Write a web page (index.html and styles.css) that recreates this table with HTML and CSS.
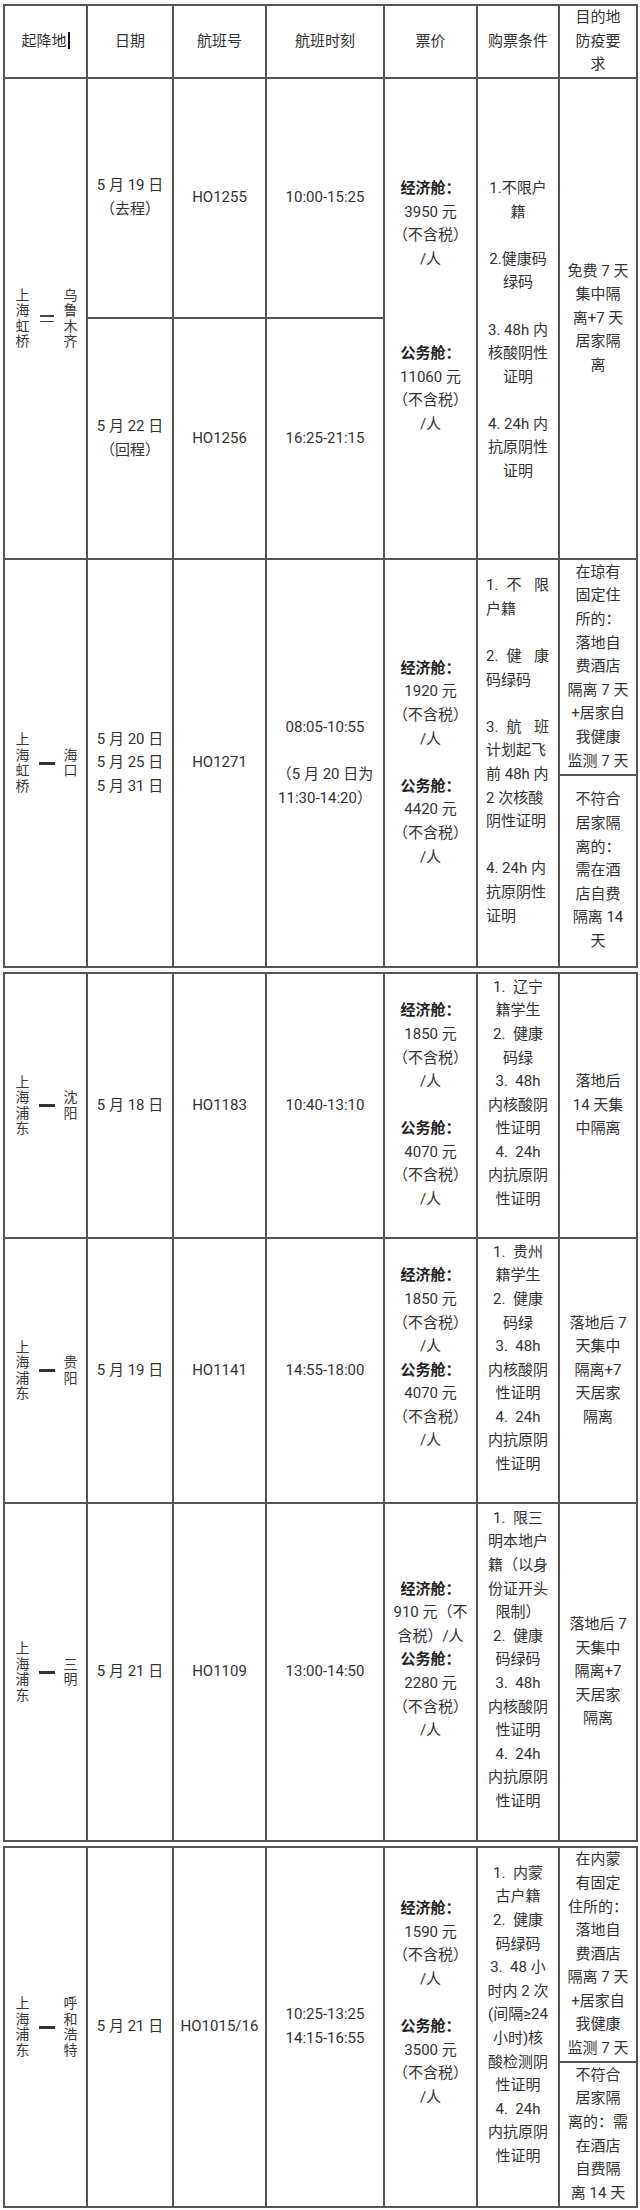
FILE: index.html
```html
<!DOCTYPE html>
<html lang="zh-CN">
<head>
<meta charset="utf-8">
<title>航班信息</title>
<link rel="stylesheet" href="styles.css">
</head>
<body>
<div class="sheet">
  <table class="t1">
    <colgroup>
      <col class="c1"><col class="c2"><col class="c3"><col class="c4"><col class="c5"><col class="c6"><col class="c7">
    </colgroup>
    <tr class="h-head">
      <td>起降地<span class="cursor"></span></td>
      <td>日期</td>
      <td>航班号</td>
      <td>航班时刻</td>
      <td>票价</td>
      <td>购票条件</td>
      <td>目的地<br>防疫要<br>求</td>
    </tr>
    <tr class="h-r1a">
      <td rowspan="2">
        <div class="route"><div class="vt">上<br>海<br>虹<br>桥</div><div class="eq"><i></i><i></i></div><div class="vt">乌<br>鲁<br>木<br>齐</div></div>
      </td>
      <td>5 月 19 日<br>（去程）</td>
      <td>HO1255</td>
      <td>10:00-15:25</td>
      <td rowspan="2"><b>经济舱：</b><br>3950 元<br>（不含税）<br>/人<br><br><br><br><b>公务舱：</b><br>11060 元<br>（不含税）<br>/人<br>&nbsp;</td>
      <td rowspan="2">&nbsp;<br>1.不限户<br>籍<br><br>2.健康码<br>绿码<br><br>3. 48h 内<br>核酸阴性<br>证明<br><br>4. 24h 内<br>抗原阴性<br>证明</td>
      <td rowspan="2">免费 7 天<br>集中隔<br>离+7 天<br>居家隔<br>离</td>
    </tr>
    <tr class="h-r1b">
      <td>5 月 22 日<br>（回程）</td>
      <td>HO1256</td>
      <td>16:25-21:15</td>
    </tr>
    <tr class="h-r2a">
      <td rowspan="2">
        <div class="route"><div class="vt">上<br>海<br>虹<br>桥</div><div class="dash"></div><div class="vt">海<br>口</div></div>
      </td>
      <td rowspan="2">5 月 20 日<br>5 月 25 日<br>5 月 31 日</td>
      <td rowspan="2">HO1271</td>
      <td rowspan="2">08:05-10:55<br><br>（5 月 20 日为<br>11:30-14:20）</td>
      <td rowspan="2"><b>经济舱：</b><br>1920 元<br>（不含税）<br>/人<br><br><b>公务舱：</b><br>4420 元<br>（不含税）<br>/人</td>
      <td rowspan="2" class="left">
        <span class="jl">1. 不 限</span>户籍<br><br><span class="jl">2. 健 康</span>码绿码<br><br><span class="jl">3. 航 班</span>计划起飞<br>前 48h 内<br>2 次核酸<br>阴性证明<br><br>4. 24h 内<br>抗原阴性<br>证明<br>&nbsp;
      </td>
      <td>在琼有<br>固定住<br>所的：<br>落地自<br>费酒店<br>隔离 7 天<br>+居家自<br>我健康<br>监测 7 天</td>
    </tr>
    <tr class="h-r2b">
      <td>不符合<br>居家隔<br>离的：<br>需在酒<br>店自费<br>隔离 14<br>天</td>
    </tr>
  </table>

  <table class="t2">
    <colgroup>
      <col class="c1"><col class="c2"><col class="c3"><col class="c4"><col class="c5"><col class="c6"><col class="c7">
    </colgroup>
    <tr class="h-r3">
      <td><div class="route"><div class="vt">上<br>海<br>浦<br>东</div><div class="dash"></div><div class="vt">沈<br>阳</div></div></td>
      <td>5 月 18 日</td>
      <td>HO1183</td>
      <td>10:40-13:10</td>
      <td><b>经济舱：</b><br>1850 元<br>（不含税）<br>/人<br><br><b>公务舱：</b><br>4070 元<br>（不含税）<br>/人</td>
      <td>1.&nbsp;&nbsp;辽宁<br>籍学生<br>2.&nbsp;&nbsp;健康<br>码绿<br>3.&nbsp;&nbsp;48h<br>内核酸阴<br>性证明<br>4.&nbsp;&nbsp;24h<br>内抗原阴<br>性证明<br>&nbsp;</td>
      <td>落地后<br>14 天集<br>中隔离</td>
    </tr>
    <tr class="h-r4">
      <td><div class="route"><div class="vt">上<br>海<br>浦<br>东</div><div class="dash"></div><div class="vt">贵<br>阳</div></div></td>
      <td>5 月 19 日</td>
      <td>HO1141</td>
      <td>14:55-18:00</td>
      <td><b>经济舱：</b><br>1850 元<br>（不含税）<br>/人<br><b>公务舱：</b><br>4070 元<br>（不含税）<br>/人<br>&nbsp;</td>
      <td>1.&nbsp;&nbsp;贵州<br>籍学生<br>2.&nbsp;&nbsp;健康<br>码绿<br>3.&nbsp;&nbsp;48h<br>内核酸阴<br>性证明<br>4.&nbsp;&nbsp;24h<br>内抗原阴<br>性证明<br>&nbsp;</td>
      <td>落地后 7<br>天集中<br>隔离+7<br>天居家<br>隔离</td>
    </tr>
    <tr class="h-r5">
      <td><div class="route"><div class="vt">上<br>海<br>浦<br>东</div><div class="dash"></div><div class="vt">三<br>明</div></div></td>
      <td>5 月 21 日</td>
      <td>HO1109</td>
      <td>13:00-14:50</td>
      <td><b>经济舱：</b><br>910 元（不<br>含税）/人<br><b>公务舱：</b><br>2280 元<br>（不含税）<br>/人<br>&nbsp;</td>
      <td>1.&nbsp;&nbsp;限三<br>明本地户<br>籍（以身<br>份证开头<br>限制）<br>2.&nbsp;&nbsp;健康<br>码绿码<br>3.&nbsp;&nbsp;48h<br>内核酸阴<br>性证明<br>4.&nbsp;&nbsp;24h<br>内抗原阴<br>性证明<br>&nbsp;</td>
      <td>落地后 7<br>天集中<br>隔离+7<br>天居家<br>隔离</td>
    </tr>
  </table>

  <table class="t3">
    <colgroup>
      <col class="c1"><col class="c2"><col class="c3"><col class="c4"><col class="c5"><col class="c6"><col class="c7">
    </colgroup>
    <tr class="h-r6a">
      <td rowspan="2"><div class="route"><div class="vt">上<br>海<br>浦<br>东</div><div class="dash"></div><div class="vt">呼<br>和<br>浩<br>特</div></div></td>
      <td rowspan="2">5 月 21 日</td>
      <td rowspan="2">HO1015/16</td>
      <td rowspan="2">10:25-13:25<br>14:15-16:55</td>
      <td rowspan="2"><b>经济舱：</b><br>1590 元<br>（不含税）<br>/人<br><br><b>公务舱：</b><br>3500 元<br>（不含税）<br>/人<br>&nbsp;<br>&nbsp;</td>
      <td rowspan="2">1.&nbsp;&nbsp;内蒙<br>古户籍<br>2.&nbsp;&nbsp;健康<br>码绿码<br>3.&nbsp;&nbsp;48 小<br>时内 2 次<br>(间隔≥24<br>小时)核<br>酸检测阴<br>性证明<br>4.&nbsp;&nbsp;24h<br>内抗原阴<br>性证明<br>&nbsp;</td>
      <td>在内蒙<br>有固定<br>住所的：<br>落地自<br>费酒店<br>隔离 7 天<br>+居家自<br>我健康<br>监测 7 天</td>
    </tr>
    <tr class="h-r6b">
      <td>不符合<br>居家隔<br>离的：需<br>在酒店<br>自费隔<br>离 14 天</td>
    </tr>
  </table>
</div>
</body>
</html>
```

FILE: styles.css
```css
html, body {
  margin: 0;
  padding: 0;
  background: #ffffff;
}

body {
  font-family: Roboto, "Noto Sans CJK SC", sans-serif;
  font-size: 15px;
  color: #333333;
}

.sheet {
  display: flex;
  flex-direction: column;
  gap: 4px;
  padding: 4px 0 0 3px;
}

table {
  border-collapse: collapse;
  table-layout: fixed;
  width: 635px;
}

td {
  border: 2px solid #555555;
  padding: 0;
  text-align: center;
  vertical-align: middle;
  line-height: 23.6px;
  white-space: nowrap;
  overflow: hidden;
}

td b {
  font-weight: 700;
  color: #222222;
}

.c1 { width: 83px; }
.c2 { width: 86px; }
.c3 { width: 93px; }
.c4 { width: 118px; }
.c5 { width: 93px; }
.c6 { width: 82px; }
.c7 { width: 78px; }

.h-head { height: 73px; }
.h-r1a { height: 240px; }
.h-r1b { height: 241px; }
.h-r2a { height: 216px; }
.h-r2b { height: 192px; }
.h-r3 { height: 265px; }
.h-r4 { height: 265px; }
.h-r5 { height: 338px; }
.h-r6a { height: 215px; }
.h-r6b { height: 145px; }

.cursor {
  display: inline-block;
  width: 2px;
  height: 17px;
  background: #111111;
  vertical-align: -3px;
  margin-left: 1px;
}

.route {
  display: grid;
  grid-template-columns: 14px 16px 14px;
  column-gap: 9px;
  justify-content: center;
  align-items: center;
  padding-left: 2px;
}

.vt {
  font-size: 14px;
  line-height: 15.5px;
  color: #3a3a3a;
}

.dash {
  height: 3px;
  background: #333333;
}

.eq {
  display: flex;
  flex-direction: column;
  gap: 4px;
  align-items: center;
}

.eq i {
  display: block;
  width: 14px;
  height: 1.5px;
  background: #444444;
}

td.left {
  text-align: left;
  padding-left: 8px;
}

.jl {
  display: block;
  width: 63px;
  text-align: justify;
  text-align-last: justify;
}
```
